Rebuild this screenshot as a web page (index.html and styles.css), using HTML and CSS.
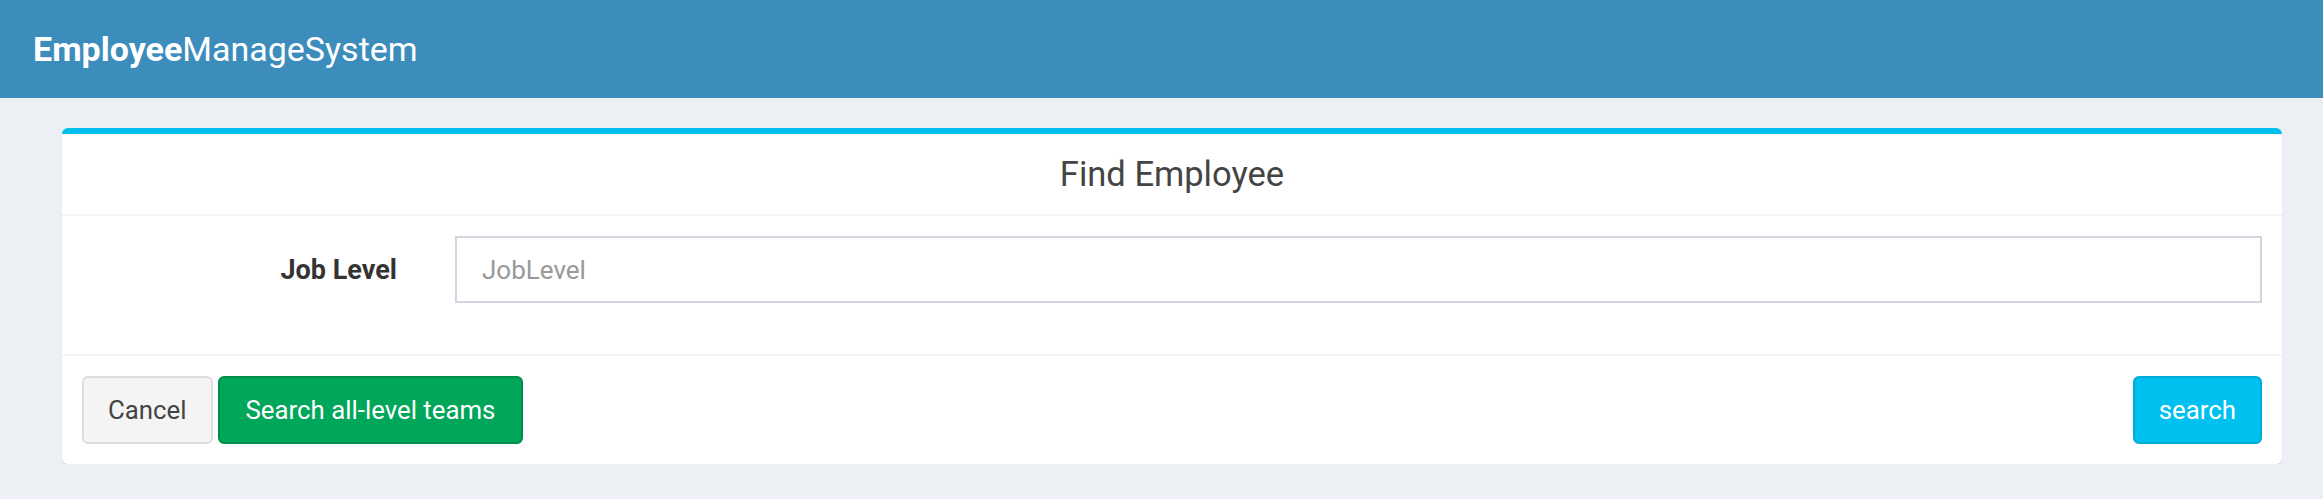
FILE: index.html
```html
<!DOCTYPE html>
<html lang="en">
<head>
<meta charset="utf-8">
<title>EmployeeManageSystem</title>
<link rel="stylesheet" href="styles.css">
</head>
<body>
<header class="main-header">
  <a class="logo" href="#"><b>Employee</b>ManageSystem</a>
</header>
<section class="content">
  <form class="box">
    <div class="box-header">
      <h3 class="box-title">Find Employee</h3>
    </div>
    <div class="box-body">
      <div class="form-group">
        <label class="control-label" for="jobLevel">Job Level</label>
        <input class="form-control" id="jobLevel" type="text" placeholder="JobLevel">
      </div>
    </div>
    <div class="box-footer">
      <div class="left-actions">
        <button type="button" class="btn btn-default">Cancel</button>
        <button type="button" class="btn btn-success">Search all-level teams</button>
      </div>
      <button type="submit" class="btn btn-info">search</button>
    </div>
  </form>
</section>
</body>
</html>
```

FILE: styles.css
```css
* { box-sizing: border-box; }

html, body {
  margin: 0;
  padding: 0;
  background: #ecf0f5;
  font-family: Roboto, "Liberation Sans", sans-serif;
  color: #333;
}

.main-header {
  height: 98px;
  background: #3c8dbc;
  display: flex;
  align-items: center;
  padding-left: 33px;
}

.logo {
  color: #fff;
  text-decoration: none;
  font-size: 34px;
  font-weight: 400;
  line-height: 1;
}

.logo b { font-weight: 700; }

.content {
  padding: 30px 41px 0 62px;
}

.box {
  background: #fff;
  border-top: 6px solid #00c0ef;
  border-radius: 6px;
  box-shadow: 0 2px 2px rgba(0, 0, 0, 0.1);
  margin: 0;
}

.box-header {
  padding: 20px;
  border-bottom: 2px solid #f4f4f4;
  text-align: center;
}

.box-title {
  margin: 0;
  font-size: 34.5px;
  font-weight: 400;
  line-height: 40px;
  color: #444;
}

.box-body {
  padding: 20px;
}

.form-group {
  display: grid;
  grid-template-columns: calc((100% + 58px) / 6 - 58px) 1fr;
  column-gap: 58px;
  align-items: center;
  margin-bottom: 31px;
}

.control-label {
  text-align: right;
  font-weight: 700;
  font-size: 27px;
  color: #333;
}

.form-control {
  height: 67px;
  border: 2px solid #d2d6de;
  border-radius: 0;
  padding: 0 25px;
  font-family: inherit;
  font-size: 26px;
  color: #555;
  outline: none;
  width: 100%;
}

.form-control::placeholder { color: #999; }

.box-footer {
  border-top: 2px solid #f4f4f4;
  padding: 20px;
  display: flex;
  justify-content: space-between;
  align-items: center;
}

.left-actions {
  display: flex;
  gap: 5px;
}

.btn {
  font-family: inherit;
  font-size: 25.8px;
  line-height: 40px;
  padding: 12px 24px;
  border: 2px solid transparent;
  border-radius: 6px;
  cursor: pointer;
}

.btn-success {
  padding: 12px 26px;
}

.btn-default {
  background: #f4f4f4;
  border-color: #ddd;
  color: #444;
}

.btn-success {
  background: #00a65a;
  border-color: #008d4c;
  color: #fff;
}

.btn-info {
  background: #00c0ef;
  border-color: #00acd6;
  color: #fff;
}
```
